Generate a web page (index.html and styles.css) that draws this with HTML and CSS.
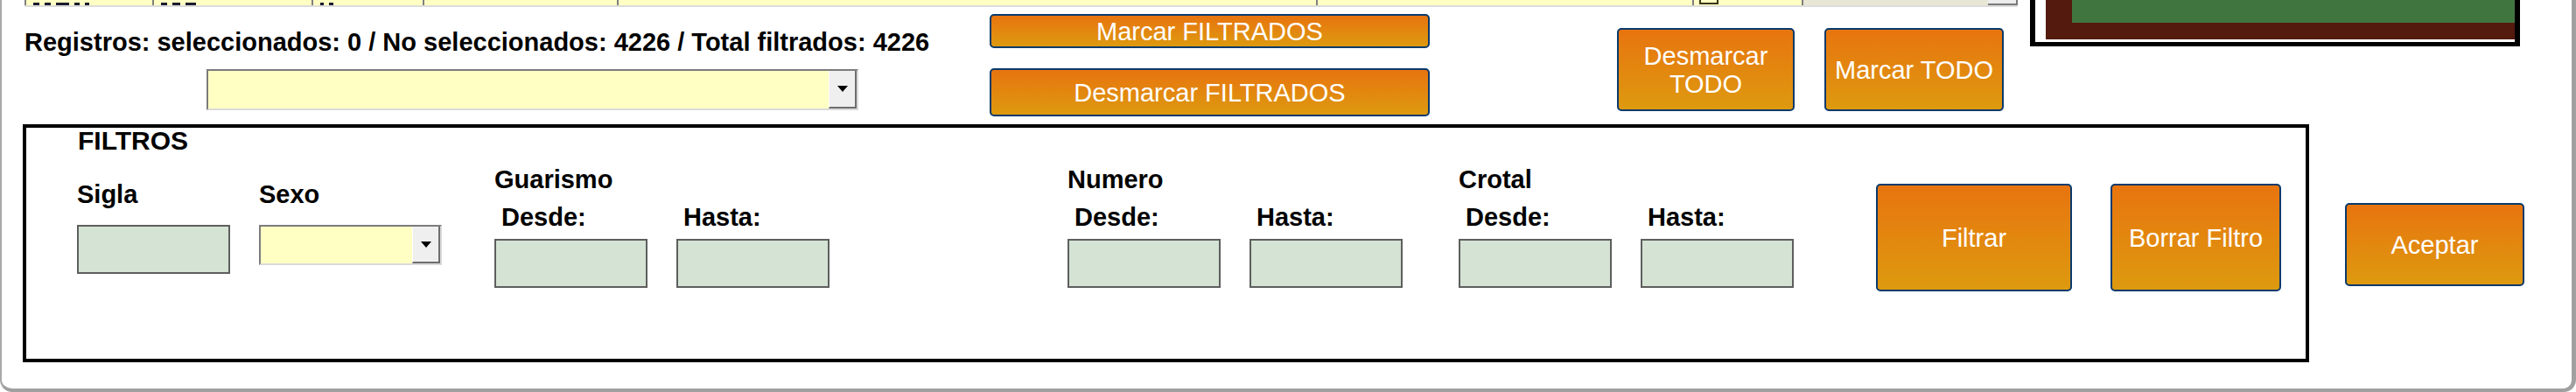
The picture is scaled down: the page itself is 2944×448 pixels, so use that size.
FILE: index.html
```html
<!DOCTYPE html>
<html lang="es">
<head>
  <meta charset="UTF-8">
  <title>Selección de registros</title>
  <link rel="stylesheet" href="styles.css">
</head>
<body>
  <div class="ventana">
    <div class="superior">
      <div class="izquierda">
        <div class="grilla">
          <div class="celda c1"><i class="marca m7"></i><i class="marca m7"></i><i class="marca m15"></i><i class="marca m6"></i><i class="marca m5"></i></div>
          <div class="celda c2"><i class="marca m7"></i><i class="marca m9"></i><i class="marca m12"></i></div>
          <div class="celda c3"><i class="marca m4"></i><i class="marca m5"></i></div>
          <div class="celda c4"></div>
          <div class="celda c5"></div>
          <div class="celda c6"></div>
          <div class="celda c7"><i class="check"></i></div>
          <div class="vacio"></div>
          <div class="scroll-btn"></div>
        </div>
        <div class="controles">
          <div class="info-col">
            <p class="info">Registros: seleccionados: 0 / No seleccionados: 4226 / Total filtrados: 4226</p>
            <div class="combo combo-grande"><span class="combo-btn"></span></div>
          </div>
          <div class="marcar-col">
            <button class="btn btn-marcar">Marcar FILTRADOS</button>
            <button class="btn btn-desmarcar">Desmarcar FILTRADOS</button>
          </div>
          <div class="todo-col">
            <button class="btn btn-todo">Desmarcar TODO</button>
            <button class="btn btn-todo btn-todo2">Marcar TODO</button>
          </div>
        </div>
      </div>
      <div class="marco">
        <div class="foto"><div class="verde"></div></div>
      </div>
    </div>

    <div class="inferior">
      <div class="filtros">
        <h3>FILTROS</h3>
        <div class="filtros-fila">
          <div class="campo c-sigla">
            <label>Sigla</label>
            <input type="text" class="caja">
          </div>
          <div class="campo c-sexo">
            <label>Sexo</label>
            <div class="combo combo-sexo"><span class="combo-btn"></span></div>
          </div>
          <div class="rango r-guarismo">
            <div class="titulo">Guarismo</div>
            <div class="sub"><span>Desde:</span><span>Hasta:</span></div>
            <div class="cajas"><input type="text" class="caja"><input type="text" class="caja"></div>
          </div>
          <div class="rango r-numero">
            <div class="titulo">Numero</div>
            <div class="sub"><span>Desde:</span><span>Hasta:</span></div>
            <div class="cajas"><input type="text" class="caja"><input type="text" class="caja"></div>
          </div>
          <div class="rango r-crotal">
            <div class="titulo">Crotal</div>
            <div class="sub"><span>Desde:</span><span>Hasta:</span></div>
            <div class="cajas"><input type="text" class="caja"><input type="text" class="caja"></div>
          </div>
          <button class="btn btn-filtrar">Filtrar</button>
          <button class="btn btn-borrar">Borrar Filtro</button>
        </div>
      </div>
      <button class="btn btn-aceptar">Aceptar</button>
    </div>
  </div>
</body>
</html>
```

FILE: styles.css
```css
body {
  margin: 0;
  background: #fff;
  font-family: "Liberation Sans", Arial, sans-serif;
  color: #000;
}
.ventana {
  width: 2944px;
  height: 448px;
  box-sizing: border-box;
  border-left: 2px solid #a9a9a9;
  border-right: 5px solid #a0a0a0;
  border-bottom: 4px solid #a0a0a0;
  border-radius: 0 0 14px 14px;
  background: #fff;
  overflow: hidden;
}

/* parte de arriba */
.superior {
  display: flex;
  height: 142px;
}
.izquierda {
  width: 2318px;
  padding-left: 26px;
  box-sizing: border-box;
}
.grilla {
  display: flex;
  width: 2278px;
  height: 8px;
  box-sizing: border-box;
  border-bottom: 2px solid #dcdcdc;
}
.celda {
  display: flex;
  box-sizing: border-box;
  border-left: 2px solid #7f7f7f;
  background: #ffffc4;
  overflow: hidden;
  padding-left: 2px;
}
/* restos de la fila anterior que asoman por abajo */
.marca {
  height: 3px;
  margin: 3px 0 0 6px;
  background: #1c1c30;
}
.m4 { width: 4px; }
.m5 { width: 5px; }
.m6 { width: 6px; }
.m7 { width: 7px; }
.m9 { width: 9px; }
.m12 { width: 12px; }
.m15 { width: 15px; }
.c1 { width: 146px; }
.c2 { width: 182px; }
.c3 { width: 127px; }
.c4 { width: 222px; }
.c5 { width: 799px; }
.c6 { width: 430px; }
.c7 { width: 125px; padding-left: 6px; }
.check {
  display: block;
  width: 22px;
  height: 5px;
  box-sizing: border-box;
  border: 2px solid #3b3614;
  border-top: 0;
}
.vacio {
  flex: 1;
  border-left: 2px solid #7f7f7f;
  background: #e8e6d4;
}
.scroll-btn {
  width: 34px;
  box-sizing: border-box;
  background: #ececec;
  border-right: 2px solid #7a7a7a;
  border-bottom: 2px solid #7a7a7a;
}

.controles {
  display: flex;
  height: 134px;
}
.info-col {
  width: 1103px;
}
.info {
  margin: 26px 0 0;
  font-size: 29px;
  font-weight: bold;
  line-height: 29px;
  white-space: nowrap;
}
.combo {
  display: flex;
  justify-content: flex-end;
  box-sizing: border-box;
  border: 2px solid;
  border-color: #7c7c7c #dadada #dadada #7c7c7c;
  background: #ffffc4;
}
.combo-btn {
  display: flex;
  align-items: center;
  justify-content: center;
  width: 32px;
  box-sizing: border-box;
  background: #efefef;
  border-left: 1px solid #fff;
  border-right: 2px solid #6e6e6e;
  border-bottom: 2px solid #6e6e6e;
}
.combo-btn::after {
  content: "";
  border-left: 6px solid transparent;
  border-right: 6px solid transparent;
  border-top: 7px solid #000;
}
.combo-grande {
  margin: 16px 0 0 208px;
  width: 745px;
  height: 47px;
}

.btn {
  display: flex;
  align-items: center;
  justify-content: center;
  box-sizing: border-box;
  margin: 0;
  padding: 0 4px;
  border: 2px solid #0b3a6b;
  border-radius: 5px;
  background: linear-gradient(#e8740f, #dd9a0f);
  color: #fff;
  font-family: "Liberation Sans", Arial, sans-serif;
  font-size: 29px;
  line-height: 32px;
  text-align: center;
}
.marcar-col {
  display: flex;
  flex-direction: column;
  width: 503px;
}
.btn-marcar {
  margin-top: 8px;
  height: 39px;
}
.btn-desmarcar {
  margin-top: 23px;
  height: 55px;
}
.todo-col {
  display: flex;
  gap: 34px;
  margin: 24px 0 0 214px;
  align-self: flex-start;
}
.btn-todo {
  width: 203px;
  height: 95px;
}
.btn-todo2 {
  width: 205px;
}

/* cuadro de la foto */
.marco {
  width: 560px;
  height: 53px;
  box-sizing: border-box;
  border: 6px solid #000;
  border-top: 0;
  border-bottom-width: 5px;
  padding: 0 0 3px 12px;
  background: #fff;
}
.foto {
  height: 45px;
  padding-left: 30px;
  background: #541a0e;
}
.verde {
  height: 26px;
  background: #417540;
}

/* filtros */
.inferior {
  display: flex;
  align-items: flex-start;
}
.filtros {
  margin-left: 24px;
  width: 2613px;
  height: 272px;
  box-sizing: border-box;
  border: 4px solid #000;
}
.filtros h3 {
  margin: 0 0 0 59px;
  font-size: 30px;
  line-height: 30px;
  font-weight: bold;
}
.filtros-fila {
  display: flex;
  align-items: flex-start;
}
.campo label,
.titulo,
.sub span {
  display: block;
  font-size: 29px;
  font-weight: bold;
  line-height: 29px;
}
.campo {
  display: flex;
  flex-direction: column;
  padding-top: 32px;
}
.campo .caja,
.campo .combo {
  margin-top: 20px;
}
.c-sigla { margin-left: 58px; }
.c-sexo { margin-left: 33px; }
.combo-sexo {
  width: 209px;
  height: 46px;
}
.caja {
  display: block;
  width: 175px;
  height: 56px;
  box-sizing: border-box;
  margin: 0;
  padding: 0;
  border: 2px solid #5e5e5e;
  background: #d4e3d4;
}
.rango {
  padding-top: 15px;
}
.sub {
  display: flex;
  gap: 33px;
  margin-top: 14px;
}
.sub span {
  width: 175px;
  box-sizing: border-box;
  padding-left: 8px;
}
.cajas {
  display: flex;
  gap: 33px;
  margin-top: 10px;
}
.r-guarismo { margin-left: 60px; }
.r-numero { margin-left: 272px; }
.r-crotal { margin-left: 64px; }
.btn-filtrar {
  margin: 34px 0 0 94px;
  width: 224px;
  height: 123px;
}
.btn-borrar {
  margin: 34px 0 0 44px;
  width: 195px;
  height: 123px;
}
.btn-aceptar {
  margin: 90px 0 0 41px;
  width: 205px;
  height: 95px;
}
```
